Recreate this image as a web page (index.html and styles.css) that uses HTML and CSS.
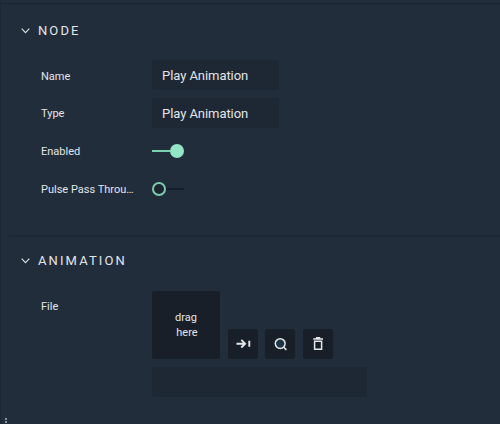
FILE: index.html
```html
<!DOCTYPE html>
<html lang="en">
<head>
<meta charset="utf-8">
<title>Node properties</title>
<link rel="stylesheet" href="styles.css">
</head>
<body>
<main class="panel">
  <section class="section">
    <h2 class="heading"><svg class="chevron" width="9" height="6" viewBox="0 0 9 6"><path d="M.7.7 4.5 4.7 8.3.7"/></svg>NODE</h2>
    <div class="row"><span class="label">Name</span><div class="field">Play Animation</div></div>
    <div class="row"><span class="label">Type</span><div class="field">Play Animation</div></div>
    <div class="row"><span class="label">Enabled</span><div class="toggle on"><i class="track"></i><i class="knob"></i></div></div>
    <div class="row"><span class="label">Pulse Pass Throu…</span><div class="toggle"><i class="knob"></i><i class="track"></i></div></div>
  </section>
  <section class="section animation">
    <h2 class="heading"><svg class="chevron" width="9" height="6" viewBox="0 0 9 6"><path d="M.7.7 4.5 4.7 8.3.7"/></svg>ANIMATION</h2>
    <div class="row file"><span class="label">File</span>
      <div class="picker">
        <div class="tools">
          <div class="drop"><span>drag</span><span class="second">here</span></div>
          <div class="button"><svg width="30" height="30" viewBox="0 0 30 30"><path class="bold" d="M8.5 14.7h8M13.3 10.9l3.8 3.8-3.8 3.8M21.3 11.7v6"/></svg></div>
          <div class="button"><svg width="30" height="30" viewBox="0 0 30 30"><circle class="lens" cx="15.2" cy="14.6" r="4.9"/><path class="stroke" d="m18.7 18.2 2.7 2.7"/></svg></div>
          <div class="button"><svg width="30" height="30" viewBox="0 0 30 30"><path class="stroke" d="M10.2 10.1h9.8M13 8.8h4.2M11.6 12.2v8h7v-8z"/></svg></div>
        </div>
        <div class="field path"></div>
      </div>
    </div>
  </section>
  <div class="grip"><i></i><i></i></div>
</main>
</body>
</html>
```

FILE: styles.css
```css
* { box-sizing: border-box; }
body { margin: 0; background: #222d3c; color: #e2e5e8; font-family: Roboto, sans-serif; }
.panel { position: relative; width: 500px; height: 424px; overflow: hidden; border-top: 3px solid #222d3c; border-left: 1px solid #1d2735; }
.panel::before { content: ""; display: block; height: 1px; background: #1b2534; }
.section { margin-left: 8px; padding-top: 16px; }
.animation { margin-top: 32px; border-top: 2px solid #1d2836; padding-top: 13px; }
.heading { display: flex; align-items: center; height: 21px; margin: 0 0 19px 12px; font-size: 13px; font-weight: 400; letter-spacing: 2.1px; }
.animation .heading { margin-bottom: 20px; }
.chevron { margin-right: 8px; fill: none; stroke: #dde1e5; stroke-width: 1.1; }
.row { display: flex; align-items: center; height: 30px; margin: 0 0 7.7px 32px; }
.label { width: 95px; margin-right: 16px; padding-top: 2px; white-space: nowrap; font-size: 11px; line-height: 15px; }
.field { width: 127px; height: 30px; padding-left: 10px; border-radius: 2px; background: #1e2734; font-size: 13px; line-height: 31px; letter-spacing: -.06px; }
.toggle { display: flex; align-items: center; width: 32px; padding-top: 2px; }
.track { flex: 1; height: 2px; background: #181f28; }
.knob { width: 14px; height: 14px; border: 2px solid #7bcbad; border-radius: 50%; background: #1c2530; }
.on .track { background: #7bd0b0; }
.on .knob { border-color: #94e5c5; background: #94e5c5; }
.file { height: auto; align-items: flex-start; }
.file .label { margin-top: 6px; }
.tools { display: flex; align-items: flex-end; gap: 7.7px; }
.drop { display: flex; flex-direction: column; align-items: center; justify-content: center; width: 68px; height: 68px; border-radius: 2px; background: #191f28; font-size: 11px; line-height: 15px; }
.second { margin-left: 2px; }
.button { width: 30px; height: 30px; border-radius: 2px; background: #191f28; }
.button svg { display: block; fill: none; stroke: #e6e7e8; }
.bold { stroke-width: 1.9; }
.lens { fill: #1c3544; stroke-width: 1.5; }
.stroke { stroke-width: 1.5; }
.path { width: 215px; margin-top: 8px; }
.grip { position: absolute; left: 4px; bottom: 1px; display: grid; gap: 1px; }
.grip i { width: 2px; height: 2px; background: #8b929b; }
```
